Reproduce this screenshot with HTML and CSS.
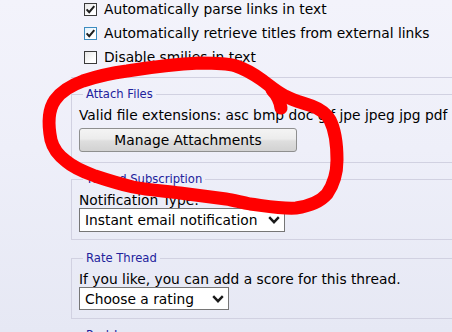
FILE: index.html
```html
<!DOCTYPE html>
<html lang="en">
<head>
<meta charset="utf-8">
<title>Additional Options</title>
<link rel="stylesheet" href="styles.css">
</head>
<body>
<div class="page">
  <div class="misc">
    <label class="opt">
      <span class="cb"><svg viewBox="0 0 13 13" width="13" height="13"><path d="M2.6 6.4 L5.2 9.2 L10.3 3.2" /></svg></span>
      <span class="opt-text">Automatically parse links in text</span>
    </label>
    <label class="opt">
      <span class="cb cb-hover"><svg viewBox="0 0 13 13" width="13" height="13"><path d="M2.6 6.4 L5.2 9.2 L10.3 3.2" /></svg></span>
      <span class="opt-text">Automatically retrieve titles from external links</span>
    </label>
    <label class="opt">
      <span class="cb"></span>
      <span class="opt-text">Disable smilies in text</span>
    </label>
  </div>

  <fieldset class="fs fs-attach">
    <legend>Attach Files</legend>
    <div class="line">Valid file extensions: asc bmp doc gif jpe jpeg jpg pdf png psd txt zip</div>
    <button class="btn" type="button">Manage Attachments</button>
  </fieldset>

  <fieldset class="fs fs-sub">
    <legend>Thread Subscription</legend>
    <div class="line">Notification Type:</div>
    <div class="sel sel-notify">
      <select><option>Instant email notification</option></select>
      <svg class="chev" viewBox="0 0 12 8" width="12" height="8"><path d="M1.2 1.2 L6 6.2 L10.8 1.2" /></svg>
    </div>
  </fieldset>

  <fieldset class="fs fs-rate">
    <legend>Rate Thread</legend>
    <div class="line">If you like, you can add a score for this thread.</div>
    <div class="sel sel-rate">
      <select><option>Choose a rating</option></select>
      <svg class="chev" viewBox="0 0 12 8" width="12" height="8"><path d="M1.2 1.2 L6 6.2 L10.8 1.2" /></svg>
    </div>
  </fieldset>

  <fieldset class="fs fs-next">
    <legend>Post Icons</legend>
    <div class="line">&nbsp;</div>
  </fieldset>
</div>

<svg class="scribble" viewBox="0 0 452 332" width="452" height="332">
  <path class="loop" d="M51,140 C48,125 48,110 55,100 C62,90 72,85 83,81 C98,76 112,73 127,71 C152,67 178,64 200,63 C214,63 226,63 236,66 C248,70 255,75 262,80 C270,86 277,92 285,96 C294,101 304,103 312,106 C320,109 326,113 330,120 C335,130 337,145 337,160 C337,172 334,184 327,194 C320,202 310,206 296,208 C282,209 266,206 250,204 C240,202 233,200 226,199 C210,197 196,195 180,193 C164,191 148,190 133,187 C120,184 107,180 95,176 C84,172 74,168 66,161 C58,155 53,148 51,140 Z"/>
  <path class="loop" d="M272,90 C277,95 280,101 281,108"/>
</svg>
</body>
</html>
```

FILE: styles.css
```css
html, body {
  margin: 0;
  padding: 0;
  overflow: hidden;
  width: 452px;
  height: 332px;
}

body {
  background: linear-gradient(#f3f3fb 0%, #eeeff9 45%, #e6e8f4 100%);
  font-family: "DejaVu Sans", Verdana, sans-serif;
  font-size: 13.8px;
  color: #000;
  position: relative;
}

.page {
  width: 900px;
  padding-left: 71px;
  box-sizing: border-box;
}

.misc {
  margin-top: -3px;
  padding: 0 0 8px 13px;
  border-bottom: 1px solid #d1d1e1;
}

.opt {
  display: flex;
  align-items: center;
  gap: 7px;
  height: 24px;
  white-space: nowrap;
}

.cb {
  flex: none;
  width: 13px;
  height: 13px;
  box-sizing: border-box;
  border: 1px solid #3a3a3a;
  background: linear-gradient(135deg, #e6e6e6, #ffffff 70%);
  display: flex;
  align-items: center;
  justify-content: center;
}

.cb svg {
  display: block;
  margin: -1px;
}

.cb path {
  fill: none;
  stroke: #1e1e1e;
  stroke-width: 2;
}

.cb-hover {
  border-color: #3c8cc0;
  background: linear-gradient(135deg, #e3f1fb, #ffffff 70%);
}

.fs {
  margin: 9px 0 0 0;
  padding: 6px 7px 7px;
  border: 1px solid #d1d1e1;
  min-width: 0;
}

.fs legend {
  margin-left: 4px;
  padding: 0 3px;
  font-size: 11.6px;
  line-height: 14px;
  color: #22229c;
}

.fs-attach {
  padding-bottom: 10px;
}

.fs-rate {
  margin-top: 11px;
  padding-bottom: 8px;
}

.line {
  line-height: 16px;
  white-space: nowrap;
}

.btn {
  display: block;
  margin-top: 5px;
  width: 218px;
  height: 24px;
  padding: 0;
  font-family: "DejaVu Sans", Verdana, sans-serif;
  font-size: 13.8px;
  color: #000;
  border: 1px solid #8e8f8f;
  border-radius: 3px;
  background: linear-gradient(#f4f4f4 0%, #ececec 45%, #dedede 55%, #d2d2d2 100%);
}

.sel {
  position: relative;
  display: inline-block;
  vertical-align: top;
}

.sel select {
  display: block;
  appearance: none;
  -webkit-appearance: none;
  height: 24px;
  margin: 0;
  padding: 0 0 0 5px;
  border: 1px solid #767676;
  border-radius: 0;
  background: #fff;
  font-family: "DejaVu Sans", Verdana, sans-serif;
  font-size: 13.8px;
  color: #000;
}

.sel-notify select {
  width: 206px;
}

.sel-rate select {
  width: 150px;
  height: 23px;
}

.chev {
  position: absolute;
  right: 5px;
  top: 50%;
  margin-top: -4px;
  pointer-events: none;
}

.chev path {
  fill: none;
  stroke: #1a1a1a;
  stroke-width: 2.4;
}

.scribble {
  position: absolute;
  left: 0;
  top: 0;
  pointer-events: none;
}

.scribble .loop {
  fill: none;
  stroke: #ff0000;
  stroke-width: 13;
  stroke-linecap: round;
  stroke-linejoin: round;
}
```
